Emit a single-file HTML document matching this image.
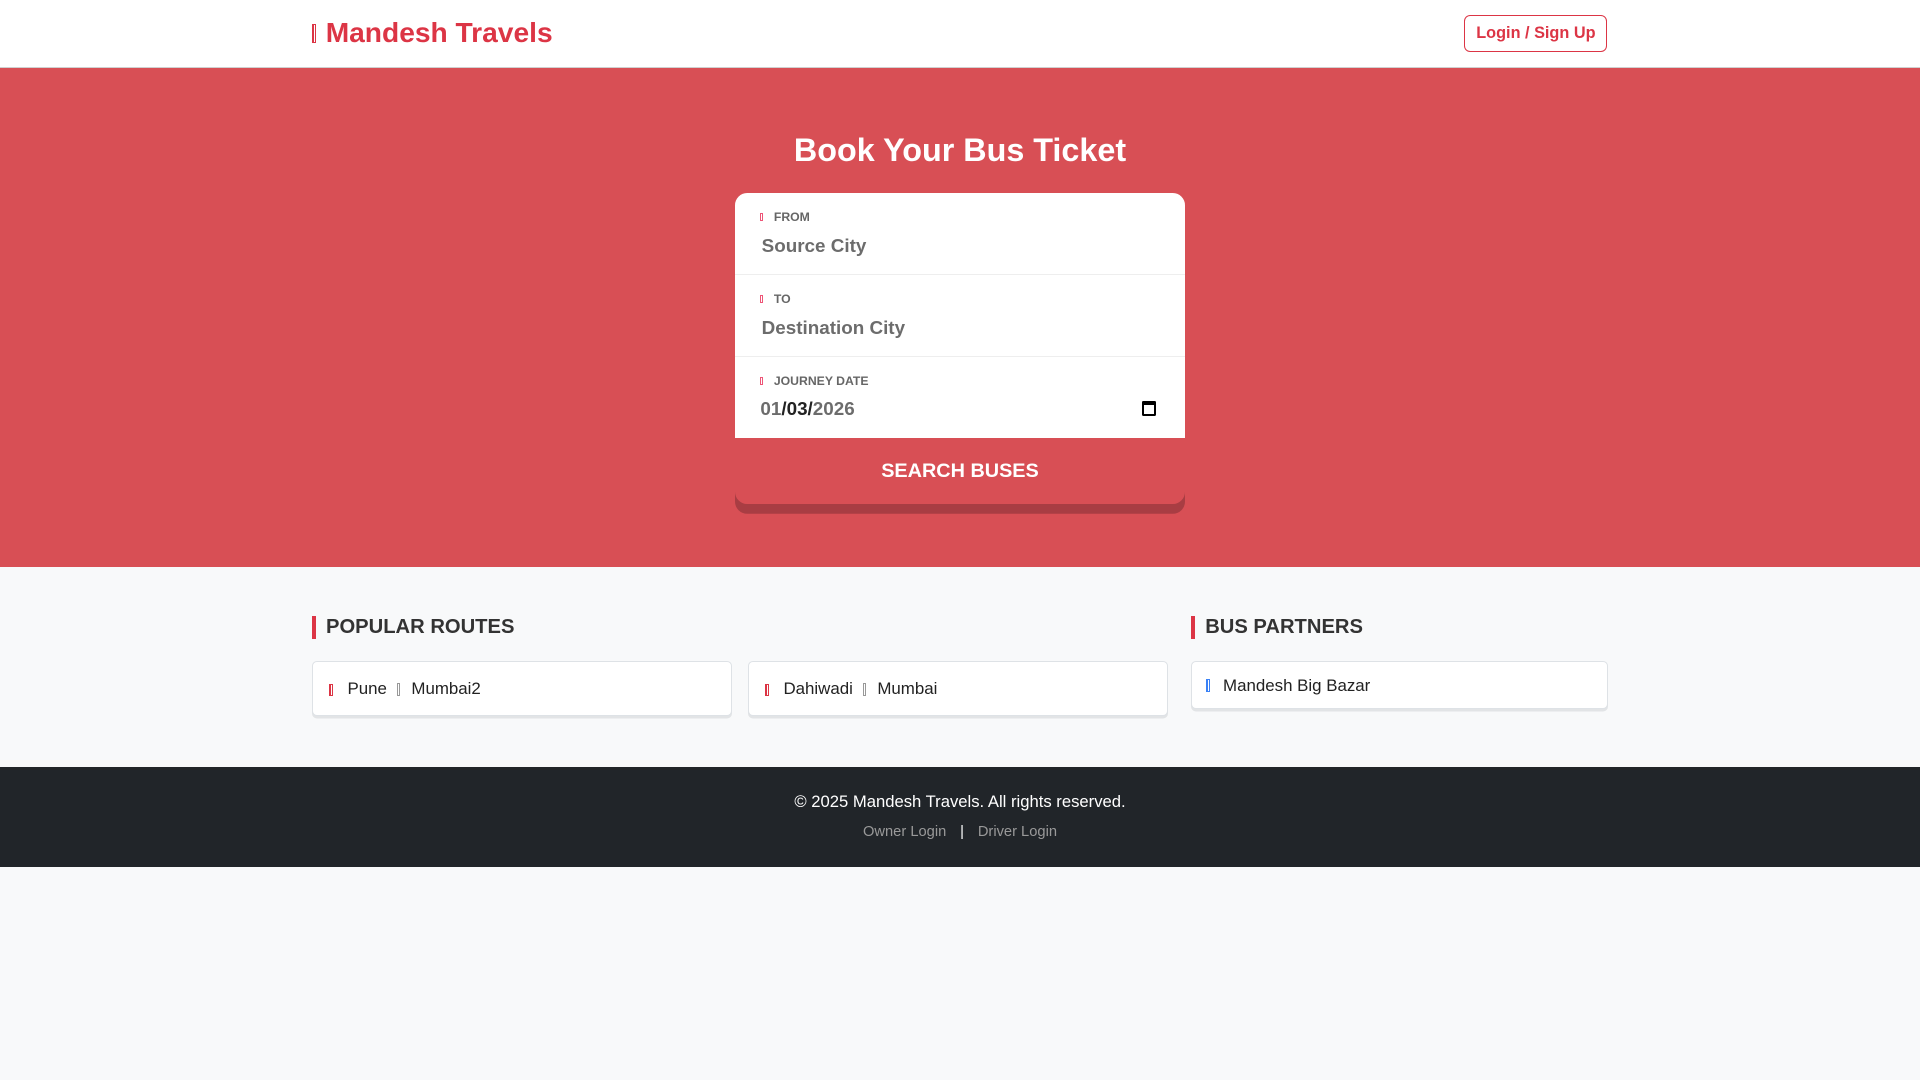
<!DOCTYPE html>
<html><head><meta charset="utf-8"><style>
html{zoom:1.22449}
body{margin:0;width:1568px;height:882px;background:#f8f9fa;font-family:"Liberation Sans",sans-serif;overflow:hidden}
.nav{height:55px;background:#fff;border-bottom:1px solid #d0d0d0;position:relative}
.brand{position:absolute;left:255px;top:14px;font-size:23px;font-weight:bold;color:#dc3545}
.ic{display:inline-block;width:3px;height:14px;border:1px solid currentColor;border-left-width:2px;box-sizing:border-box;vertical-align:middle}
.login{position:absolute;left:1196px;top:12px;width:115px;height:29px;border:1px solid #dc3545;border-radius:5px;color:#dc3545;font-size:13.3px;font-weight:bold;text-align:center;line-height:29px}
.hero{height:407px;background:#d84f55;position:relative}
.hero h1{margin:0;position:absolute;top:52px;width:100%;text-align:center;color:#fff;font-size:26.4px}
.card{position:absolute;left:600px;top:102px;width:368px}
.f{background:#fff;height:67px;border-bottom:1px solid #eee;position:relative;box-sizing:border-box}
.f:first-child{border-radius:10px 10px 0 0}
.lab{position:absolute;left:21px;top:14px;font-size:10px;font-weight:bold;color:#666}
.lab .ic{width:2px;height:7px;color:#e57;margin-right:9px;border-width:1px;vertical-align:0}
.val{position:absolute;left:22px;top:34px;font-size:15.4px;font-weight:bold;color:#6c6c6c}
.btn{height:54px;background:#d84f55;color:#fff;font-weight:bold;font-size:16.2px;text-align:center;line-height:54px;border-radius:0 0 10px 10px;box-shadow:0 8px 0 #a83d43}
.sec{position:absolute;top:503px;font-size:16.5px;font-weight:bold;color:#333;border-left:4px solid #dc3545;padding-left:8px;line-height:19px}
.rc{position:absolute;top:540px;height:45px;background:#fff;border:1px solid #dee2e6;border-radius:4px;box-shadow:0 2px 0 #e2e4e6;font-size:13.8px;color:#222;box-sizing:border-box;padding:14px 0 0 28px}
.rc .ic{height:10px;position:absolute;left:13px;top:18px;color:#dc3545;width:3px}
.rc .m{display:inline-block;width:3px;height:10px;border:1px solid #999;box-sizing:border-box;margin:0 9px 0 8px;vertical-align:-1px}
.foot{position:absolute;top:626px;left:0;width:1568px;height:82px;background:#212529;text-align:center;color:#fff}
</style></head><body>
<div class="nav"><div class="brand"><span class="ic" style="height:16px;margin-right:8px;vertical-align:-1px"></span>Mandesh Travels</div><div class="login">Login / Sign Up</div></div>
<div class="hero"><h1>Book Your Bus Ticket</h1>
<div class="card">
<div class="f"><div class="lab"><span class="ic"></span>FROM</div><div class="val">Source City</div></div>
<div class="f"><div class="lab"><span class="ic"></span>TO</div><div class="val">Destination City</div></div>
<div class="f" style="height:66px;border:0"><div class="lab"><span class="ic"></span>JOURNEY DATE</div><div class="val" style="top:33px;left:21px">01<span style="color:#222">/03/</span>2026</div><div style="position:absolute;right:24px;top:36px;width:11px;height:12px;border:2px solid #000;border-top-width:4px;border-radius:1px;box-sizing:border-box"></div></div>
<div class="btn">SEARCH BUSES</div>
</div></div>
<div class="sec" style="left:255px">POPULAR ROUTES</div>
<div class="sec" style="left:973px">BUS PARTNERS</div>
<div class="rc" style="left:255px;width:343px"><span class="ic"></span>Pune<span class="m"></span>Mumbai2</div>
<div class="rc" style="left:611px;width:343px"><span class="ic"></span>Dahiwadi<span class="m"></span>Mumbai</div>
<div class="rc" style="left:973px;width:340px;height:39px;padding-top:11px;padding-left:25px"><span class="ic" style="color:#3b82f6;left:11px;top:14px"></span>Mandesh Big Bazar</div>
<div class="foot"><div style="padding-top:21px;font-size:13.6px">© 2025 Mandesh Travels. All rights reserved.</div>
<div style="margin-top:10px;font-size:12px;color:#999">Owner Login <span style="color:#fff;margin:0 8px">|</span> Driver Login</div></div>
</body></html>
